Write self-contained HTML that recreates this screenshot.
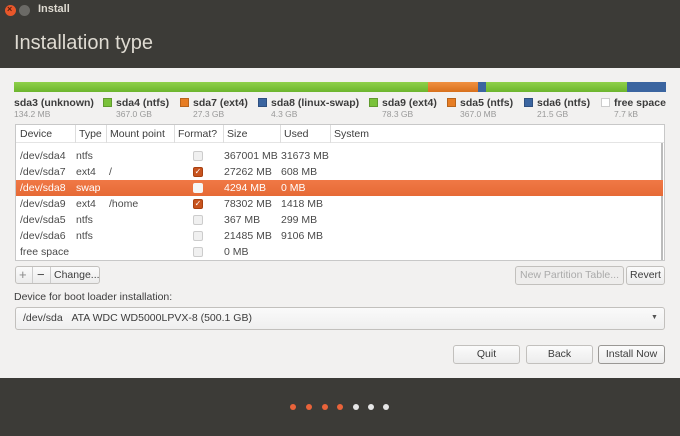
<!DOCTYPE html>
<html><head><meta charset="utf-8"><style>
*{margin:0;padding:0;box-sizing:border-box}
body{width:680px;height:436px;overflow:hidden;background:#f2f1f0;font-family:"Liberation Sans","DejaVu Sans",sans-serif;font-size:11px;color:#3c3c3c;position:relative}
.a{position:absolute}
.hdr{left:0;top:0;width:680px;height:68px;background:#3c3b37}
.ftr{left:0;top:378px;width:680px;height:58px;background:#3c3b37}
.dot{width:6px;height:6px;border-radius:50%;top:404px}
.bar{top:82px;height:10px}
.lg{top:97px;font-weight:bold;font-size:10.5px;color:#3c3c3c;white-space:nowrap}
.sz{top:109px;font-size:8.5px;color:#999;white-space:nowrap}
.sq{display:inline-block;width:9px;height:9px;margin-right:4px;vertical-align:-1px;border:1px solid rgba(0,0,0,.2)}
.tbl{left:15px;top:124px;width:650px;height:137px;background:#fff;border:1px solid #c8c8c8}
.row{left:0;width:647px;height:16px;font-size:10.5px;line-height:16px;color:#4a4a4a}
.row span{position:absolute}
.cb{position:absolute;left:177px;top:3px;width:10px;height:10px;border:1px solid #ccc;border-radius:2px;background:#f0f0f0}
.cb.on{background:#c8541f;border-color:#a84010;color:#fff;font-size:8px;line-height:8px;text-align:center}
.btn{border:1px solid #c2c0bd;border-radius:3px;background:linear-gradient(#fbfbfb,#ececec);font-size:10.5px;text-align:center;color:#3c3c3c}
</style></head><body>
<div class="a hdr"></div>
<div class="a" style="left:5px;top:5px;width:11px;height:11px;border-radius:50%;background:#e9572a"></div>
<div class="a" style="left:7px;top:4px;font-size:9px;color:#5a2010;font-weight:bold">×</div>
<div class="a" style="left:19px;top:5px;width:11px;height:11px;border-radius:50%;background:#6b6a66"></div>
<div class="a" style="left:38px;top:3px;font-size:11px;font-weight:bold;color:#dfdbd2">Install</div>
<div class="a" style="left:14px;top:32px;font-size:20px;color:#dfdbd2">Installation type</div>

<div class="a bar" style="left:14px;width:414px;background:linear-gradient(#8fd04a,#6cb52d)"></div>
<div class="a bar" style="left:428px;width:50px;background:linear-gradient(#f09040,#d8701c)"></div>
<div class="a bar" style="left:478px;width:8px;background:#3b65a0"></div>
<div class="a bar" style="left:486px;width:141px;background:linear-gradient(#8fd04a,#6cb52d)"></div>
<div class="a bar" style="left:627px;width:39px;background:#3b65a0"></div>

<div class="a lg" style="left:14px">sda3 (unknown)</div><div class="a sz" style="left:14px">134.2 MB</div>
<div class="a lg" style="left:103px"><span class="sq" style="background:#7ac23a"></span>sda4 (ntfs)</div><div class="a sz" style="left:116px">367.0 GB</div>
<div class="a lg" style="left:180px"><span class="sq" style="background:#e77d24"></span>sda7 (ext4)</div><div class="a sz" style="left:193px">27.3 GB</div>
<div class="a lg" style="left:258px"><span class="sq" style="background:#3b65a0"></span>sda8 (linux-swap)</div><div class="a sz" style="left:271px">4.3 GB</div>
<div class="a lg" style="left:369px"><span class="sq" style="background:#7ac23a"></span>sda9 (ext4)</div><div class="a sz" style="left:382px">78.3 GB</div>
<div class="a lg" style="left:447px"><span class="sq" style="background:#e77d24"></span>sda5 (ntfs)</div><div class="a sz" style="left:460px">367.0 MB</div>
<div class="a lg" style="left:524px"><span class="sq" style="background:#3b65a0"></span>sda6 (ntfs)</div><div class="a sz" style="left:537px">21.5 GB</div>
<div class="a lg" style="left:601px"><span class="sq" style="background:#fff"></span>free space</div><div class="a sz" style="left:614px">7.7 kB</div>

<div class="a tbl">
<div class="a" style="left:0;top:0;width:648px;height:18px;border-bottom:1px solid #e4e4e4;font-size:10.5px;line-height:18px">
<span class="a" style="left:4px">Device</span><span class="a" style="left:59px;border-left:1px solid #ddd;padding-left:3px">Type</span><span class="a" style="left:90px;border-left:1px solid #ddd;padding-left:3px">Mount point</span><span class="a" style="left:158px;border-left:1px solid #ddd;padding-left:3px">Format?</span><span class="a" style="left:207px;border-left:1px solid #ddd;padding-left:3px">Size</span><span class="a" style="left:264px;border-left:1px solid #ddd;padding-left:3px">Used</span><span class="a" style="left:314px;border-left:1px solid #ddd;padding-left:3px">System</span></div>
<div class="a" style="left:645px;top:18px;width:2px;height:117px;background:#bbb"></div>
<div class="a row" style="top:23px"><span style="left:4px">/dev/sda4</span><span style="left:60px">ntfs</span><i class="cb"></i><span style="left:208px">367001 MB</span><span style="left:265px">31673 MB</span></div>
<div class="a row" style="top:39px"><span style="left:4px">/dev/sda7</span><span style="left:60px">ext4</span><span style="left:93px">/</span><i class="cb on">✓</i><span style="left:208px">27262 MB</span><span style="left:265px">608 MB</span></div>
<div class="a row" style="top:55px;background:linear-gradient(#f07846,#e66a36);color:#fff"><span style="left:4px">/dev/sda8</span><span style="left:60px">swap</span><i class="cb" style="background:#f5f5f5;border-color:#f5f5f5"></i><span style="left:208px">4294 MB</span><span style="left:265px">0 MB</span></div>
<div class="a row" style="top:71px"><span style="left:4px">/dev/sda9</span><span style="left:60px">ext4</span><span style="left:93px">/home</span><i class="cb on">✓</i><span style="left:208px">78302 MB</span><span style="left:265px">1418 MB</span></div>
<div class="a row" style="top:87px"><span style="left:4px">/dev/sda5</span><span style="left:60px">ntfs</span><i class="cb"></i><span style="left:208px">367 MB</span><span style="left:265px">299 MB</span></div>
<div class="a row" style="top:103px"><span style="left:4px">/dev/sda6</span><span style="left:60px">ntfs</span><i class="cb"></i><span style="left:208px">21485 MB</span><span style="left:265px">9106 MB</span></div>
<div class="a row" style="top:119px"><span style="left:4px">free space</span><i class="cb"></i><span style="left:208px">0 MB</span></div>
</div>

<div class="a btn" style="left:15px;top:266px;width:85px;height:18px"></div>
<div class="a" style="left:19px;top:267px;font-size:13px;color:#888">+</div>
<div class="a" style="left:32px;top:267px;width:1px;height:16px;background:#ccc"></div>
<div class="a" style="left:37px;top:267px;font-size:13px;color:#444">−</div>
<div class="a" style="left:50px;top:267px;width:1px;height:16px;background:#ccc"></div>
<div class="a" style="left:54px;top:269px;font-size:10.5px">Change...</div>
<div class="a btn" style="left:515px;top:266px;width:109px;height:19px;line-height:17px;color:#aaa;background:#eeedec">New Partition Table...</div>
<div class="a btn" style="left:626px;top:266px;width:39px;height:19px;line-height:17px">Revert</div>

<div class="a" style="left:14px;top:291px;font-size:10.5px">Device for boot loader installation:</div>
<div class="a btn" style="left:15px;top:307px;width:650px;height:23px;line-height:21px;text-align:left;padding-left:7px;background:linear-gradient(#fafafa,#efefef)">/dev/sda&nbsp;&nbsp;&nbsp;ATA WDC WD5000LPVX-8 (500.1 GB)</div>
<div class="a" style="left:651px;top:314px;font-size:7px;color:#555">▼</div>

<div class="a btn" style="left:453px;top:345px;width:67px;height:19px;line-height:17px">Quit</div>
<div class="a btn" style="left:526px;top:345px;width:67px;height:19px;line-height:17px">Back</div>
<div class="a btn" style="left:598px;top:345px;width:67px;height:19px;line-height:17px;border-color:#9a9895">Install Now</div>

<div class="a ftr"></div>
<div class="a dot" style="left:290px;background:#e9633a"></div>
<div class="a dot" style="left:306px;background:#e9633a"></div>
<div class="a dot" style="left:322px;background:#e9633a"></div>
<div class="a dot" style="left:337px;background:#e9633a"></div>
<div class="a dot" style="left:353px;background:#e6e6e6"></div>
<div class="a dot" style="left:368px;background:#e6e6e6"></div>
<div class="a dot" style="left:383px;background:#e6e6e6"></div>
</body></html>
